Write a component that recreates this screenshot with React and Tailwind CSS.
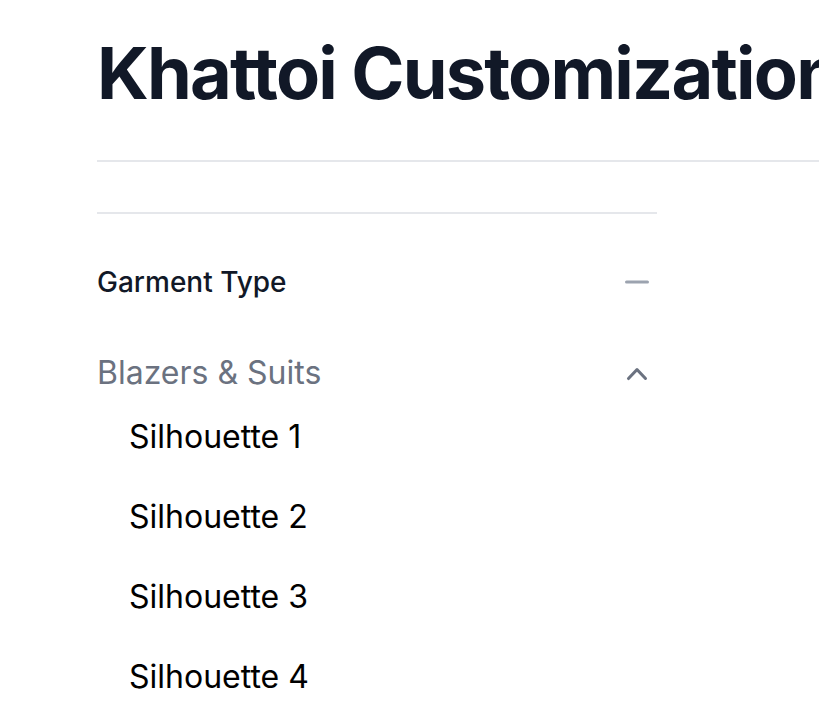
import React, { useState } from 'react';

const silhouettes = ['Silhouette 1', 'Silhouette 2', 'Silhouette 3', 'Silhouette 4'];

function MinusIcon() {
    return (
        <svg viewBox="0 0 20 20" fill="currentColor" className="w-10 h-10">
            <path fillRule="evenodd" d="M4 10a.75.75 0 01.75-.75h10.5a.75.75 0 010 1.5H4.75A.75.75 0 014 10z" clipRule="evenodd" />
        </svg>
    );
}

function ChevronUp() {
    return (
        <svg viewBox="0 0 20 20" fill="currentColor" className="w-10 h-10">
            <path fillRule="evenodd" d="M14.77 12.79a.75.75 0 01-1.06-.02L10 8.832 6.29 12.77a.75.75 0 11-1.08-1.04l4.25-4.5a.75.75 0 011.08 0l4.25 4.5a.75.75 0 01-.02 1.06z" clipRule="evenodd" />
        </svg>
    );
}

export default function App() {
    const [open, setOpen] = useState(true);

    return (
        <div className="w-[819px] h-[705px] overflow-hidden bg-white pl-[97px]" style={{ fontFamily: 'Inter, "Noto Sans", sans-serif' }}>
            {/* page header */}
            <div className="border-b-2 border-[#e5e7eb] pt-[37px] pb-[51px]">
                <h1 className="text-[72px] leading-[72px] font-bold tracking-tight text-[#111827] whitespace-nowrap">
                    Khattoi Customization
                </h1>
            </div>

            {/* filters */}
            <div className="w-[560px] mt-[50px] border-t-2 border-[#e5e7eb]">
                <div className="mt-[48px] flex items-center justify-between h-10">
                    <span className="text-[28px] leading-10 font-medium text-[#111827]">Garment Type</span>
                    <span className="text-[#9ca3af]"><MinusIcon /></span>
                </div>

                <button
                    className="mt-[47px] w-full flex items-center justify-between h-12 text-left"
                    onClick={() => setOpen(!open)}
                >
                    <span className="text-[32px] leading-[48px] text-[#6b7280]">Blazers &amp; Suits</span>
                    <span className="text-[#6b7280] mt-[2px]"><ChevronUp /></span>
                </button>

                {open && (
                    <ul className="mt-[16px] pl-8 flex flex-col gap-8">
                        {silhouettes.map(s => (
                            <li key={s} className="text-[32px] leading-[48px] text-black">{s}</li>
                        ))}
                    </ul>
                )}
            </div>
        </div>
    );
}
